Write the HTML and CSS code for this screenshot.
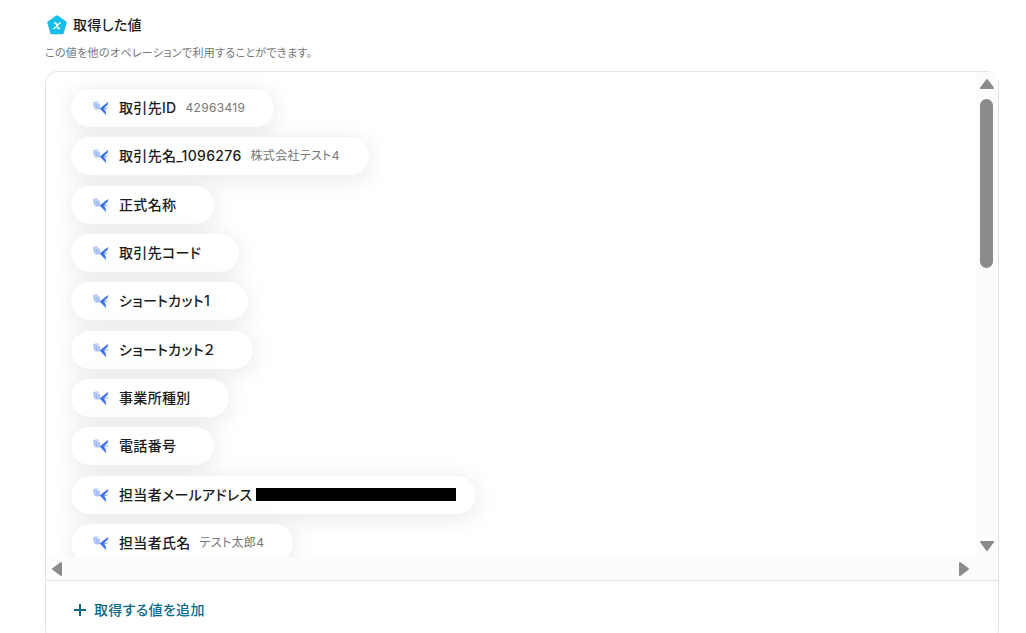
FILE: index.html
```html
<!DOCTYPE html>
<html lang="ja">
<head>
    <meta charset="UTF-8">
    <meta name="viewport" content="width=device-width, initial-scale=1.0">
    <title>取得した値</title>
    <link rel="stylesheet" href="styles.css">
</head>
<body>
    <svg class="sprite" aria-hidden="true">
        <symbol id="icon-app" viewBox="0 0 18 16">
            <path d="M1 2.500l5-1 .5 2 1.500.5V9l-4 .5-2-1z" fill="#d3e0fd"/>
            <path d="M1.500 2.500l4-.8M2 4.500l5-.5M2.500 6.500H7.500M3 8.800h4.500M2 3l.5 5M4.700 4.500v4.500M7 4v5" stroke="#8fb0f9" stroke-width=".8" fill="none"/>
            <path d="M8 8.600L15.800 2.500 15.500 4.500 11.500 8.400 13.200 11 13.800 14.500z" fill="#3a70f7" stroke="#3a70f7" stroke-width=".6" stroke-linejoin="round"/>
            <path d="M12 8l5-.6-2.500 1.400-2 .4z" fill="#7ba0f8"/>
        </symbol>
    </svg>

    <main class="output">
        <h1 class="title">
            <svg class="title-icon" viewBox="0 0 20 20" aria-hidden="true">
                <path d="M10 1.500 18.500 7.500 15.500 18H4.500L1.500 7.500z" fill="#16bdea" stroke="#16bdea" stroke-width="2.500" stroke-linejoin="round"/>
                <path d="M7.500 8h1.300l2.400 5.500h1.300" fill="none" stroke="#fff" stroke-width="1.500" stroke-linecap="round" stroke-linejoin="round"/>
                <path d="M13.500 8h-.8L7.300 13.500h-.8" fill="none" stroke="#fff" stroke-width="1.200" stroke-linecap="round" stroke-linejoin="round"/>
            </svg>
            取得した値
        </h1>
        <p class="description">この値を他のオペレーションで利用することができます。</p>

        <section class="card">
            <div class="scroll-area">
                <div class="viewport">
                    <ul class="values">
                        <li><div class="chip"><svg class="chip-icon"><use href="#icon-app"/></svg><span class="name">取引先ID</span><span class="value">42963419</span></div></li>
                        <li><div class="chip"><svg class="chip-icon"><use href="#icon-app"/></svg><span class="name">取引先名_1096276</span><span class="value">株式会社テスト4</span></div></li>
                        <li><div class="chip"><svg class="chip-icon"><use href="#icon-app"/></svg><span class="name">正式名称</span><span class="value"></span></div></li>
                        <li><div class="chip"><svg class="chip-icon"><use href="#icon-app"/></svg><span class="name">取引先コード</span><span class="value"></span></div></li>
                        <li><div class="chip"><svg class="chip-icon"><use href="#icon-app"/></svg><span class="name">ショートカット1</span><span class="value"></span></div></li>
                        <li><div class="chip"><svg class="chip-icon"><use href="#icon-app"/></svg><span class="name">ショートカット２</span><span class="value"></span></div></li>
                        <li><div class="chip"><svg class="chip-icon"><use href="#icon-app"/></svg><span class="name">事業所種別</span><span class="value"></span></div></li>
                        <li><div class="chip"><svg class="chip-icon"><use href="#icon-app"/></svg><span class="name">電話番号</span><span class="value"></span></div></li>
                        <li><div class="chip chip-masked"><svg class="chip-icon"><use href="#icon-app"/></svg><span class="name">担当者メールアドレス</span><span class="mask"></span></div></li>
                        <li><div class="chip"><svg class="chip-icon"><use href="#icon-app"/></svg><span class="name">担当者氏名</span><span class="value">テスト太郎4</span></div></li>
                    </ul>
                </div>
                <div class="bar bar-vertical">
                    <svg class="arrow" viewBox="0 0 16 12"><path d="M8 2l6 8H2z"/></svg>
                    <div class="track"><div class="thumb"></div></div>
                    <svg class="arrow" viewBox="0 0 16 12"><path d="M8 10l6-8H2z"/></svg>
                </div>
                <div class="bar bar-horizontal">
                    <svg class="arrow" viewBox="0 0 12 16"><path d="M2 8l8-6v12z"/></svg>
                    <svg class="arrow" viewBox="0 0 12 16"><path d="M10 8L2 2v12z"/></svg>
                </div>
                <div class="bar"></div>
            </div>
            <footer class="card-footer">
                <button class="add-button" type="button">
                    <svg class="plus" viewBox="0 0 14 14" aria-hidden="true"><path d="M7 1v12M1 7h12"/></svg>
                    取得する値を追加
                </button>
            </footer>
        </section>
    </main>
</body>
</html>
```
FILE: styles.css
```css
* {
    box-sizing: border-box;
    margin: 0;
    padding: 0;
}
body {
    height: 100vh;
    overflow: hidden;
    font-family: Inter, "Noto Sans CJK JP", sans-serif;
    font-feature-settings: "palt";
    letter-spacing: 0.02em;
    color: #1c1c1c;
    background-color: #fff;
}
.sprite {
    display: none;
}
.output {
    padding: 15px 27px 0 45px;
}
.title {
    display: flex;
    align-items: center;
    gap: 4px;
    height: 20px;
    font-size: 14px;
    font-weight: 500;
    line-height: 20px;
}
.title-icon {
    width: 24px;
    height: 20px;
}
.description {
    margin: 8px 0;
    font-size: 11px;
    line-height: 20px;
    letter-spacing: 0.03em;
    color: #777;
}
.card {
    border: 1px solid #e3e3e3;
    border-radius: 12px;
}
.scroll-area {
    display: grid;
    grid-template-columns: 1fr 23px;
    grid-template-rows: 485px 23px;
}
.viewport {
    overflow: hidden;
    padding: 12px 20px 0;
    border-top-left-radius: 12px;
}
.values {
    display: grid;
    grid-auto-rows: 1fr;
    min-height: 483px;
    padding-left: 4px;
    list-style: none;
}
.values li {
    display: flex;
    align-items: center;
}
.chip {
    display: flex;
    align-items: center;
    height: 40px;
    padding: 0 29px 0 21px;
    border: 1px solid #f4f4f4;
    border-radius: 20px;
    background-color: #fff;
    box-shadow: 0 4px 24px rgba(0, 0, 0, 0.09);
    white-space: nowrap;
}
.chip-masked {
    padding-right: 20px;
}
.chip-icon {
    width: 18px;
    height: 16px;
    margin-right: 9px;
}
.name {
    font-size: 14px;
    font-weight: 500;
    line-height: 20px;
}
.value {
    margin-left: 9px;
    font-size: 12px;
    line-height: 20px;
    color: #777;
}
.mask {
    width: 200px;
    height: 13px;
    margin-left: 4px;
    background-color: #000;
}
.bar {
    background-color: #fcfcfc;
}
.bar-vertical {
    display: flex;
    flex-direction: column;
    align-items: center;
    padding: 6px 0 5px;
}
.bar-horizontal {
    display: flex;
    align-items: center;
    justify-content: space-between;
    padding: 0 5px;
}
.arrow {
    width: 16px;
    height: 12px;
    fill: #8b8b8b;
    stroke: #8b8b8b;
    stroke-width: 2px;
    stroke-linejoin: round;
}
.bar-horizontal .arrow {
    width: 12px;
    height: 16px;
}
.track {
    flex: 1;
    padding-top: 9px;
}
.thumb {
    width: 13px;
    height: 169px;
    border-radius: 8px;
    background-color: #8b8b8b;
}
.card-footer {
    padding: 18px 27px 20px;
    border-top: 1px solid #e3e3e3;
}
.add-button {
    display: flex;
    align-items: center;
    gap: 7px;
    border: none;
    background: none;
    font: inherit;
    font-size: 14px;
    font-weight: 500;
    line-height: 22px;
    letter-spacing: inherit;
    color: #0b6a88;
    cursor: pointer;
}
.plus {
    width: 14px;
    height: 14px;
    fill: none;
    stroke: #0b6a88;
    stroke-width: 2px;
}
```
